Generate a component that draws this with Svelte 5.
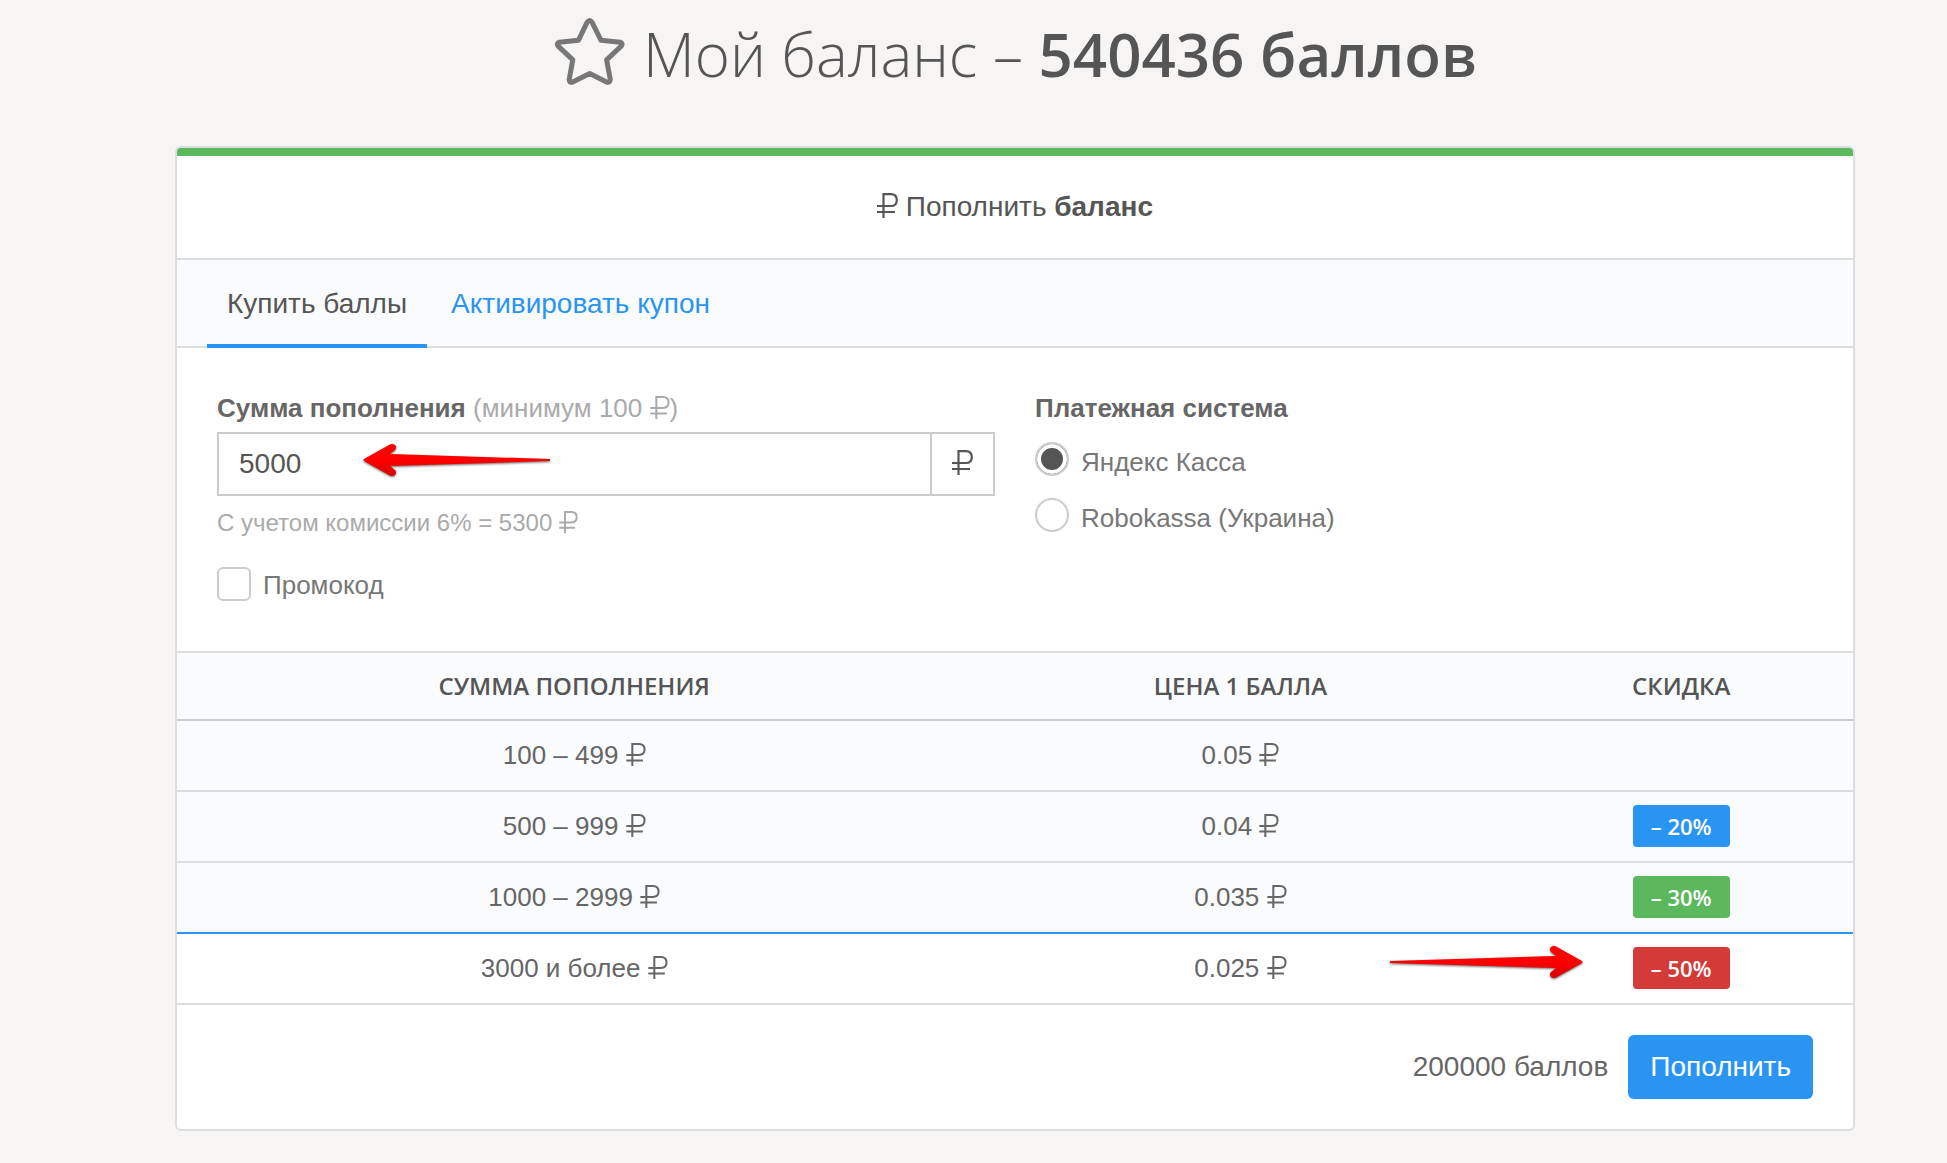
<script>
	let activeTab = $state('buy');
	let amount = $state('5000');
	let system = $state('yandex');
	let promo = $state(false);

	const tabs = [
		{ id: 'buy', title: 'Купить баллы' },
		{ id: 'coupon', title: 'Активировать купон' }
	];

	const systems = [
		{ id: 'yandex', title: 'Яндекс Касса' },
		{ id: 'robokassa', title: 'Robokassa (Украина)' }
	];

	const prices = [
		{ sum: '100 – 499', price: '0.05' },
		{ sum: '500 – 999', price: '0.04', discount: '– 20%', color: 'blue' },
		{ sum: '1000 – 2999', price: '0.035', discount: '– 30%', color: 'green' },
		{ sum: '3000 и более', price: '0.025', discount: '– 50%', color: 'red', current: true }
	];
</script>

{#snippet rub(width = 20, height = 23)}
	<svg class="rub" {width} {height} viewBox="0 0 21 25" role="img" aria-label="₽">
		<path d="M6.5 25 V1.2 H13.8 C17.8 1.2 19.8 3.6 19.8 7.2 C19.8 10.8 17.8 13 13.8 13 H0 M0 19 H18" />
	</svg>
{/snippet}

{#snippet arrow(width, cls)}
	<svg class="arrow {cls}" {width} height="36" viewBox="0 0 {width} 36" aria-hidden="true">
		<defs>
			<linearGradient id="fill-{cls}" x1="0" y1="0" x2="0" y2="1">
				<stop offset="0.45" stop-color="#ff0000" />
				<stop offset="1" stop-color="#dc0000" />
			</linearGradient>
		</defs>
		<path
			fill="url(#fill-{cls})"
			d="M0 16 L{width - 27} 11 L{width - 32} 7 Q{width - 34} 4 {width - 32} 2 Q{width - 29} 0 {width - 26} 2 L{width - 1} 16 Q{width} 17 {width - 1} 18 L{width - 26} 32 Q{width - 29} 34 {width - 32} 32 Q{width - 34} 29 {width - 32} 27 L{width - 27} 23 L0 18 Z"
		/>
	</svg>
{/snippet}

<main>
	<h1>
		<svg class="star" width="72" height="68" viewBox="-2 0 72 68" aria-hidden="true">
			<path
				d="M32.2 4.2 Q34.7 0.8 37 4.2 L46 22.3 L65 24.2 Q68.4 25.4 66.2 28.2 L51.6 41.8 L55.3 61.5 Q55.2 65 51.5 64 L34.7 55.4 L17.7 64 Q14 65 14.2 61.5 L17.8 41.8 L3.2 28.2 Q1 25.4 4.4 24.2 L23.4 22.3 Z"
			/>
		</svg>
		<span>Мой баланс – <b>540436 баллов</b></span>
	</h1>

	<section class="card">
		<h2>{@render rub(21, 25)} Пополнить <b>баланс</b></h2>

		<nav>
			{#each tabs as tab}
				<button class="tab" class:active={activeTab === tab.id} onclick={() => (activeTab = tab.id)}>{tab.title}</button>
			{/each}
		</nav>

		<div class="form">
			<div class="column">
				<label class="title" for="amount">
					<b>Сумма пополнения</b> <span class="muted">(минимум 100 {@render rub()})</span>
				</label>
				<div class="group">
					<input id="amount" type="text" bind:value={amount} />
					<span class="addon">{@render rub(21, 25)}</span>
					{@render arrow(187, 'to-input')}
				</div>
				<p class="help">С учетом комиссии 6% = 5300 {@render rub(19, 22)}</p>
				<label class="check promo">
					<input type="checkbox" bind:checked={promo} />
					Промокод
				</label>
			</div>

			<fieldset class="column">
				<legend class="title"><b>Платежная система</b></legend>
				<div class="radios">
					{#each systems as item}
						<label class="check">
							<input type="radio" name="system" value={item.id} bind:group={system} />
							{item.title}
						</label>
					{/each}
				</div>
			</fieldset>
		</div>

		<table>
			<thead>
				<tr>
					<th class="col-sum">Сумма пополнения</th>
					<th class="col-price">Цена 1 балла</th>
					<th>Скидка</th>
				</tr>
			</thead>
			<tbody>
				{#each prices as row}
					<tr class:current={row.current}>
						<td>{row.sum} {@render rub()}</td>
						<td>{row.price} {@render rub()}</td>
						<td>
							{#if row.discount}
								<span class="badge {row.color}">
									{row.discount}
									{#if row.current}{@render arrow(193, 'to-badge')}{/if}
								</span>
							{/if}
						</td>
					</tr>
				{/each}
			</tbody>
		</table>

		<footer>
			<span>200000 баллов</span>
			<button class="submit">Пополнить</button>
		</footer>
	</section>
</main>

<style>
	:global(body) {
		background: #f6f5f3;
	}

	main {
		padding: 0 92px 32px 175px;
		font-family: 'Liberation Sans', Arial, sans-serif;
		font-size: 26px;
		color: #666;
	}

	h1 {
		display: flex;
		justify-content: center;
		align-items: center;
		gap: 18px;
		height: 108px;
		margin: 0 0 38px;
		font-family: 'Open Sans', sans-serif;
		font-size: 60px;
		font-weight: 300;
		line-height: 108px;
		color: #555;
	}

	h1 b {
		font-weight: 600;
	}

	.star {
		margin-bottom: 4px;
		fill: none;
		stroke: #777;
		stroke-width: 5;
		stroke-linejoin: round;
	}

	.rub {
		fill: none;
		stroke: currentColor;
		stroke-width: 2.2;
		vertical-align: -2px;
	}

	.card {
		border: 2px solid #dcddde;
		border-radius: 6px;
		background: #fff;
		overflow: hidden;
	}

	h2 {
		margin: 0;
		border-top: 8px solid #5cb85c;
		border-bottom: 2px solid #dcddde;
		font-size: 28px;
		font-weight: 400;
		line-height: 102px;
		text-align: center;
		color: #555;
	}

	nav {
		display: flex;
		gap: 4px;
		padding: 0 30px;
		border-bottom: 2px solid #dcddde;
		background: #fafbfd;
	}

	.tab {
		margin-bottom: -2px;
		padding: 4px 20px 0;
		border: 0;
		border-bottom: 4px solid transparent;
		background: none;
		font: inherit;
		font-size: 28px;
		line-height: 80px;
		color: #2a94f2;
		cursor: pointer;
	}

	.tab.active {
		border-color: #2a94f2;
		color: #555;
	}

	.form {
		display: grid;
		grid-template-columns: 1fr 1fr;
		gap: 40px;
		padding: 40px 40px 48px;
	}

	.column {
		min-width: 0;
		margin: 0;
		padding: 0;
		border: 0;
	}

	.title {
		display: block;
		padding: 0;
		line-height: 40px;
		margin-bottom: 4px;
	}

	.muted {
		color: #aaa;
	}

	.group {
		position: relative;
		display: flex;
		border: 2px solid #ccc;
	}

	.group input {
		flex: 1;
		min-width: 0;
		height: 60px;
		box-sizing: border-box;
		padding: 0 20px;
		border: 0;
		font: inherit;
		font-size: 28px;
		color: #555;
		outline: none;
	}

	.addon {
		width: 61px;
		border-left: 2px solid #ccc;
		font-size: 28px;
		line-height: 60px;
		text-align: center;
		color: #555;
	}

	.arrow {
		position: absolute;
		filter: drop-shadow(0 1px 1px rgba(0, 0, 0, 0.6));
	}

	.to-input {
		top: 9px;
		left: 144px;
		transform: scaleX(-1);
	}

	.to-badge {
		top: -2px;
		right: calc(100% + 50px);
	}

	.help {
		margin: 9px 0 26px;
		font-size: 24px;
		line-height: 36px;
		color: #aaa;
	}

	.check {
		display: flex;
		align-items: flex-start;
		gap: 12px;
		line-height: 40px;
		color: #777;
	}

	.promo {
		line-height: 36px;
	}

	.check input {
		appearance: none;
		width: 34px;
		height: 34px;
		margin: 0;
		border: 2px solid #ccc;
		border-radius: 6px;
		background: #fff;
	}

	.check input[type='radio'] {
		border-radius: 50%;
	}

	.check input:checked {
		background: #555;
		box-shadow: inset 0 0 0 4px #fff;
	}

	.radios {
		display: grid;
		gap: 16px;
		padding-top: 10px;
	}

	table {
		width: 100%;
		table-layout: fixed;
		border-spacing: 0;
		border-top: 2px solid #dcddde;
		text-align: center;
	}

	.col-sum {
		width: 47.4%;
	}

	.col-price {
		width: 32.1%;
	}

	th {
		height: 64px;
		padding: 0 0 2px;
		border-bottom: 2px solid #ccc;
		background: #fafbfd;
		font-family: 'Open Sans', sans-serif;
		font-size: 24px;
		font-weight: 600;
		text-transform: uppercase;
		color: #555;
	}

	td {
		height: 69px;
		padding: 0;
		border-bottom: 2px solid #dcddde;
		background: #fafbfd;
	}

	/* the row above the current one carries the blue line */
	tr:has(+ .current) td {
		border-color: #2a94f2;
	}

	.current td {
		background: #fff;
	}

	.badge {
		position: relative;
		display: inline-block;
		margin-bottom: 2px;
		padding: 0 18px;
		border-radius: 4px;
		font-family: 'Open Sans', sans-serif;
		font-size: 22px;
		font-weight: 600;
		line-height: 42px;
		vertical-align: middle;
		color: #fff;
	}

	.blue {
		background: #2a94f2;
	}

	.green {
		background: #5cb85c;
	}

	.red {
		background: #d43a37;
	}

	footer {
		display: flex;
		justify-content: flex-end;
		align-items: center;
		gap: 20px;
		padding: 30px 40px;
		font-size: 28px;
	}

	.submit {
		height: 64px;
		padding: 0 22px;
		border: 0;
		border-radius: 6px;
		background: #2a94f2;
		font: inherit;
		color: #fff;
		cursor: pointer;
	}
</style>
